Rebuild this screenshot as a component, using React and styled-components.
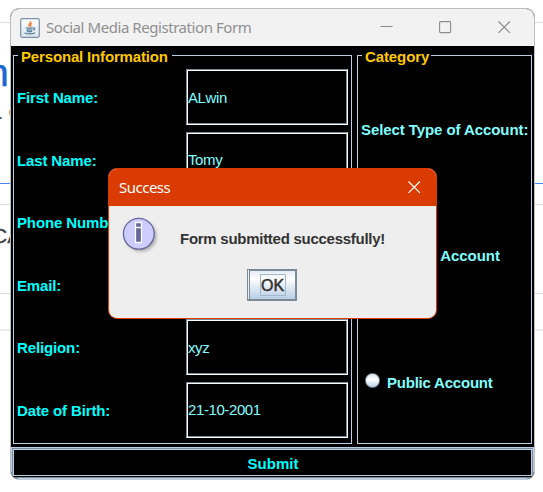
import React from "react";
import styled, { createGlobalStyle } from "styled-components";

const Global = createGlobalStyle`
  * { box-sizing: border-box; }
  html, body { margin: 0; background: #fff; overflow: hidden; }
`;

const Desktop = styled.main`
  position: relative;
  width: 543px;
  height: 492px;
  padding: 8px 0 0 10px;
  overflow: hidden;
  background: #fff;
  font-family: "Liberation Sans", Arial, sans-serif;
`;

const PageRule = styled.div`
  position: absolute;
  left: 0;
  top: ${(p) => p.$top}px;
  width: 543px;
  height: ${(p) => p.$size || 1}px;
  background: ${(p) => p.$color};
`;

const PageText = styled.span`
  position: absolute;
  left: ${(p) => p.$left}px;
  top: ${(p) => p.$top}px;
  font-size: ${(p) => p.$size}px;
  line-height: 1;
  color: ${(p) => p.$color};
  -webkit-text-stroke: ${(p) => p.$stroke || 0}px ${(p) => p.$color};
  white-space: nowrap;
`;

const Frame = styled.section`
  position: relative;
  width: 525px;
  height: 472px;
  display: flex;
  flex-direction: column;
  border: 1px solid #bcbcbc;
  border-bottom-color: #c3ccd8;
  border-radius: 9px;
  overflow: hidden;
  background: #000;
`;

const TitleBar = styled.header`
  flex: 0 0 37px;
  display: flex;
  align-items: center;
  padding-left: 9px;
  background: #f2f2f2;
  color: #8f8f8f;
  font: 15px "Noto Sans", sans-serif;
`;

const Title = styled.span`
  flex: 1;
  margin-left: 6px;
  margin-top: -1px;
  white-space: nowrap;
  letter-spacing: -0.44px;
`;

const WindowControls = styled.div`
  display: flex;
  gap: 46px;
  padding-right: 23px;
`;

const Panels = styled.div`
  flex: 0 0 401px;
  display: grid;
  grid-template-columns: 339px 175px;
  grid-template-rows: 389px;
  column-gap: 5px;
  padding: 9px 0 3px 2px;
`;

const Group = styled.fieldset`
  position: relative;
  min-width: 0;
  margin: 0;
  padding: 0;
  border: 1px solid #b8cfe5;
`;

const GroupTitle = styled.span`
  position: absolute;
  top: -9px;
  left: 4px;
  padding: 0 ${(p) => p.$pad || 0}px 0 3px;
  background: #000;
  color: #ffc800;
  font-size: 15px;
  line-height: 20px;
  font-weight: 700;
  letter-spacing: ${(p) => p.$spacing}px;
  white-space: nowrap;
`;

const FieldList = styled.div`
  display: grid;
  grid-template-rows: repeat(6, 56px);
  row-gap: 6.6px;
  padding: 13px 3px 0;
`;

const FieldRow = styled.label`
  display: grid;
  grid-template-columns: 169px 162px;
  align-items: center;
`;

const Label = styled.span`
  padding-top: 2px;
  color: #00ffff;
  font-size: 15px;
  line-height: 20px;
  font-weight: 700;
  letter-spacing: -0.13px;
  white-space: nowrap;
`;

const Input = styled.input`
  width: 162px;
  height: 56px;
  padding: 0 0 0 1px;
  border: 1px solid #7a8a99;
  border-right-color: #fff;
  border-bottom-color: #fff;
  outline: 0;
  box-shadow: inset 1px 1px #fff, inset -1px -1px #7a8a99;
  background: #000;
  color: #80ffff;
  font: 15px "Liberation Sans", Arial, sans-serif;
  letter-spacing: -0.4px;
`;

const AccountOptions = styled.div`
  display: grid;
  grid-template-rows: repeat(3, 126.5px);
  align-items: center;
  padding: 9.5px 3px 0;
`;

const Option = styled.label`
  display: flex;
  align-items: center;
  gap: 6px;
  padding-left: 4px;
`;

const OptionText = styled.span`
  padding-top: 2px;
  color: #80ffff;
  font-size: 15px;
  line-height: 20px;
  font-weight: 700;
  letter-spacing: ${(p) => p.$spacing}px;
  white-space: nowrap;
`;

const Radio = styled.span`
  width: 15px;
  height: 15px;
  margin: -2px 1px 0 0;
  border: 1px solid #7a8a99;
  border-radius: 50%;
  background: linear-gradient(#dce7f2, #fff 45%, #b8cfe5);
`;

const SubmitButton = styled.button`
  flex: 0 0 32px;
  margin: 0;
  padding: 2px 0 0 1px;
  border: 1px solid #b8cfe5;
  background: #000;
  box-shadow:
    inset 1px 1px #7a8a99,
    inset 0 -1px #7a8a99,
    inset 0 -2px #000,
    inset 2px 2px #b8cfe5,
    inset -1px 0 #7a8a99,
    inset -2px -3px #b8cfe5;
  color: #00ffff;
  font: 700 15px/20px "Liberation Sans", Arial, sans-serif;
`;

const Dialog = styled.div`
  position: absolute;
  left: 108px;
  top: 168px;
  width: 329px;
  height: 151px;
  border: 1px solid #da3b01;
  border-radius: 9px;
  overflow: hidden;
  background: #eee;
`;

const DialogBar = styled.header`
  height: 37px;
  display: flex;
  align-items: center;
  justify-content: space-between;
  padding: 0 15px 1px 10px;
  background: #da3b01;
  color: #fff;
  font: 15px "Noto Sans", sans-serif;
  letter-spacing: -0.5px;
`;

const DialogBody = styled.div`
  display: flex;
  align-items: flex-start;
  padding: 10px 0 0 12px;
  height: 63px;
`;

const Message = styled.p`
  margin: 13px 0 0 19px;
  color: #333;
  font-size: 15px;
  line-height: 20px;
  font-weight: 700;
  letter-spacing: -0.27px;
  white-space: nowrap;
`;

const OkButton = styled.button`
  display: grid;
  place-items: center;
  width: 50px;
  height: 32px;
  margin: 0 0 0 138px;
  padding: 0;
  border: 2px solid #7a8a99;
  border-left-width: 1px;
  border-top-width: 1px;
  box-shadow: inset 1px 0 #eee, inset 2px 1px #7a8a99;
  background: linear-gradient(#dfe9f3, #fff 30%, #e3ecf5 55%, #b8cfe5);
`;

const OkText = styled.span`
  width: 26px;
  height: 22px;
  margin-left: 2px;
  border: 1px solid #a3b8cc;
  color: #333;
  font: 16px/22px "Liberation Sans", Arial, sans-serif;
  -webkit-text-stroke: 0.5px #333;
`;

const JavaIcon = () => (
  <svg width="20" height="20" viewBox="0 0 20 20" fill="none">
    <defs>
      <linearGradient id="java-bg" x1="0" y1="0" x2="0" y2="1">
        <stop stopColor="#fff" />
        <stop offset="1" stopColor="#dce3e9" />
      </linearGradient>
    </defs>
    <rect x=".7" y=".7" width="18.6" height="18.6" rx="1.5" fill="url(#java-bg)" stroke="#7890a5" strokeWidth="1.2" />
    <path d="M10.6 3c1 2-3.4 3-1.2 6M12 5.5c-2 1-2 2-.8 3.5" stroke="#e58b45" strokeWidth="1.4" />
    <path d="M5.8 9.8c2 .6 5 .5 7 0M6.3 11.7c2 .6 4.3.6 6.2 0M7 13.4c1.6.5 3.5.5 5 0M13 10c2.5-.4 2.1 1.7.3 2.4M4.5 15c2.8 1.3 8 1.3 10.7-.2" stroke="#55809f" strokeWidth="1.2" />
  </svg>
);

const MinimizeIcon = () => (
  <svg width="13" height="13" viewBox="0 0 13 13"><path d="M.5 5.5h12" stroke="#8b8b8b" /></svg>
);

const MaximizeIcon = () => (
  <svg width="13" height="13" viewBox="0 0 13 13"><rect x=".6" y=".6" width="11" height="11" rx="1" fill="none" stroke="#8b8b8b" strokeWidth="1.1" /></svg>
);

const CloseIcon = ({ color = "#8b8b8b" }) => (
  <svg width="13" height="13" viewBox="0 0 13 13"><path d="m.5.5 11.4 11.4m0-11.4L.5 11.9" stroke={color} strokeWidth="1.2" /></svg>
);

const InfoIcon = () => (
  <svg width="40" height="40" viewBox="0 0 40 40">
    <defs>
      <filter id="shadow" x="-20%" y="-20%" width="150%" height="150%">
        <feGaussianBlur stdDeviation="1.5" />
      </filter>
    </defs>
    <circle cx="20" cy="20" r="15.5" fill="#888" opacity=".65" filter="url(#shadow)" />
    <circle cx="17.8" cy="17.8" r="15.4" fill="#ccf" stroke="#669" strokeWidth="1.3" />
    <path d="M14.5 6.5h6v5h-6zM14.5 11.5h6v15h-6z" fill="#669" stroke="#fff" strokeWidth="1.3" />
  </svg>
);

const fields = [
  ["First Name:", "ALwin"],
  ["Last Name:", "Tomy"],
  ["Phone Number:", ""],
  ["Email:", ""],
  ["Religion:", "xyz"],
  ["Date of Birth:", "21-10-2001"],
];

export default function App() {
  return (
    <Desktop>
      <Global />
      <PageRule $top={22} $color="#dadce0" />
      <PageRule $top={183} $color="#4285f4" />
      <PageRule $top={204} $color="#dadce0" />
      <PageRule $top={293} $color="#dadce0" />
      <PageRule $top={329} $size={2} $color="#ebebef" />
      <PageText $left={-13} $top={53} $size={39} $stroke={0.4} $color="#1967d2">n-</PageText>
      <PageText $left={-2} $top={103} $size={19} $color="#4d5156">. C</PageText>
      <PageText $left={-8} $top={225} $size={21} $stroke={0.3} $color="#3c4043">CA</PageText>
      <Frame>
        <TitleBar>
          <JavaIcon />
          <Title>Social Media Registration Form</Title>
          <WindowControls><MinimizeIcon /><MaximizeIcon /><CloseIcon /></WindowControls>
        </TitleBar>
        <Panels>
          <Group>
            <GroupTitle $spacing={-0.16} $pad={4}>Personal Information</GroupTitle>
            <FieldList>
              {fields.map(([label, value]) => (
                <FieldRow key={label}>
                  <Label>{label}</Label>
                  <Input defaultValue={value} />
                </FieldRow>
              ))}
            </FieldList>
          </Group>
          <Group>
            <GroupTitle $spacing={-0.1} $pad={2}>Category</GroupTitle>
            <AccountOptions>
              <OptionText $spacing={-0.08}>Select Type of Account:</OptionText>
              <Option><Radio /><OptionText $spacing={-0.05}>Private Account</OptionText></Option>
              <Option><Radio /><OptionText $spacing={-0.22}>Public Account</OptionText></Option>
            </AccountOptions>
          </Group>
        </Panels>
        <SubmitButton type="button">Submit</SubmitButton>
      </Frame>
      <Dialog role="dialog">
        <DialogBar>Success<CloseIcon color="#fff" /></DialogBar>
        <DialogBody><InfoIcon /><Message>Form submitted successfully!</Message></DialogBody>
        <OkButton type="button"><OkText>OK</OkText></OkButton>
      </Dialog>
    </Desktop>
  );
}
